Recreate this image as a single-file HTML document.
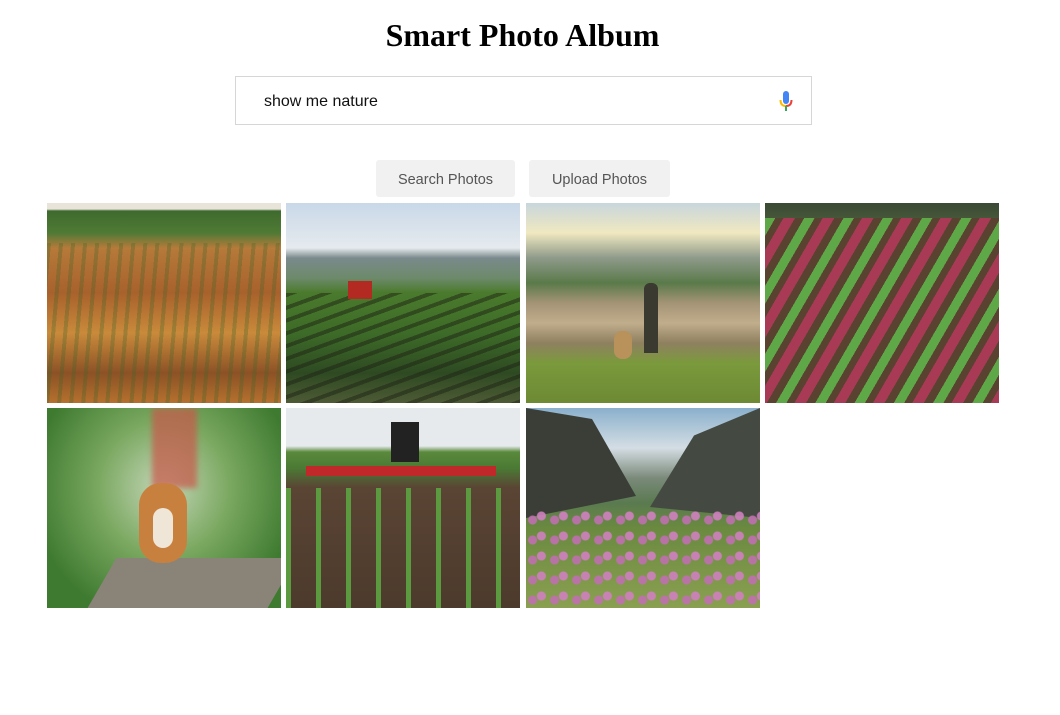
<!DOCTYPE html>
<html><head><meta charset="utf-8"><style>
html,body{margin:0;padding:0;background:#fff;width:1060px;height:715px;overflow:hidden}
h1{position:absolute;left:0;width:1045px;top:17px;margin:0;text-align:center;font-family:"Liberation Serif",serif;font-weight:bold;font-size:32px;color:#000}
.search{position:absolute;left:235px;top:76px;width:575px;height:47px;border:1px solid #d6d6d6;box-sizing:content-box}
.search span{position:absolute;left:28px;top:16px;font-family:"Liberation Sans",sans-serif;font-size:16px;color:#111}
.btn{position:absolute;top:160px;height:37px;background:#f1f1f1;border-radius:3px;font-family:"Liberation Sans",sans-serif;font-size:14.5px;color:#555;text-align:center;line-height:41px}
.img{position:absolute;width:234px;height:200px;overflow:hidden}
</style></head><body>
<h1>Smart Photo Album</h1>
<div class="search"><span>show me nature</span>
<svg style="position:absolute;left:543px;top:14px" width="14" height="21" viewBox="0 0 14 21">
<rect x="4" y="0" width="6" height="13" rx="3" fill="#4285f4"/>
<path d="M1.5 9 Q1.5 15 7 15" stroke="#fbbc05" stroke-width="2" fill="none"/>
<path d="M12.5 9 Q12.5 15 7 15" stroke="#ea4335" stroke-width="2" fill="none"/>
<rect x="6" y="15" width="2" height="5" fill="#34a853"/>
</svg></div>
<div class="btn" style="left:376px;width:139px">Search Photos</div>
<div class="btn" style="left:529px;width:141px">Upload Photos</div>

<div class="img" style="left:47px;top:203px;background:linear-gradient(#e8e4da 0,#e8e4da 6px,#3e6a2e 8px,#4f7a35 30px,#b67a3a 45px,#a8612c 90px,#c98a3b 130px,#8c5226 170px,#b5702e 200px)">
<div style="position:absolute;inset:40px 0 0 0;background:repeating-linear-gradient(95deg,rgba(60,100,40,.3) 0 4px,transparent 4px 12px)"></div></div>

<div class="img" style="left:286px;top:203px;background:linear-gradient(#c9d8e8 0,#e5eaee 45px,#7a8a8c 55px,#6d8a6a 75px,#4a7a2c 90px,#3d6b28 130px,#2e4a22 170px,#4d5a35 200px)">
<div style="position:absolute;inset:90px 0 0 0;background:repeating-linear-gradient(160deg,rgba(30,35,20,.5) 0 4px,transparent 4px 12px)"></div>
<div style="position:absolute;left:62px;top:78px;width:24px;height:18px;background:#b22a22"></div></div>

<div class="img" style="left:526px;top:203px;background:linear-gradient(#c8d6dc 0,#f0e8c0 30px,#8e9a8a 55px,#5a7a4a 80px,#a49476 100px,#c0ad8c 120px,#8f8060 140px,#7a9a3c 160px,#6d8a34 200px)">
<div style="position:absolute;left:118px;top:80px;width:14px;height:70px;background:#3a3a30;border-radius:6px 6px 0 0"></div>
<div style="position:absolute;left:88px;top:128px;width:18px;height:28px;background:#b8925a;border-radius:8px"></div></div>

<div class="img" style="left:765px;top:203px;background:linear-gradient(#3a4a34 0,#4a5a3a 20px,#5a4034 40px,#55412f 200px)">
<div style="position:absolute;inset:15px 0 0 0;background:repeating-linear-gradient(120deg,#5ea848 0 9px,#5a4231 9px 16px,#a83a55 16px 26px,#5a4231 26px 34px)"></div></div>

<div class="img" style="left:47px;top:408px;background:radial-gradient(ellipse at 50% 40%,#c4d6b8 0,#7aa860 40%,#3e7a30 80%)">
<div style="position:absolute;left:105px;top:0;width:45px;height:80px;background:#c8584a;opacity:.7;filter:blur(3px)"></div>
<div style="position:absolute;left:55px;top:150px;width:180px;height:50px;background:#8a8478;transform:skewX(-30deg)"></div>
<div style="position:absolute;left:92px;top:75px;width:48px;height:80px;background:#c8803e;border-radius:22px"></div>
<div style="position:absolute;left:106px;top:100px;width:20px;height:40px;background:#f0e6d8;border-radius:10px"></div></div>

<div class="img" style="left:286px;top:408px;background:linear-gradient(#e6eaec 0,#e6eaec 38px,#5a8a3c 44px,#4b7a34 60px,#5a4434 80px,#4c3a2c 200px)">
<div style="position:absolute;inset:80px 0 0 0;background:repeating-linear-gradient(90deg,#5c9a40 0 5px,transparent 5px 30px)"></div>
<div style="position:absolute;left:20px;top:58px;width:190px;height:10px;background:#c0282a"></div>
<div style="position:absolute;left:105px;top:14px;width:28px;height:40px;background:#222"></div></div>

<div class="img" style="left:526px;top:408px;background:linear-gradient(#8ab0cc 0,#d4dde4 40px,#7a8a7a 70px,#5a7a50 95px,#6a8a40 120px,#8aa050 200px)">
<div style="position:absolute;left:0;top:0;width:110px;height:110px;background:#3a3e36;clip-path:polygon(0 0,60% 10%,100% 80%,0 100%)"></div>
<div style="position:absolute;right:0;top:0;width:110px;height:110px;background:#444a42;clip-path:polygon(100% 0,40% 25%,0 90%,100% 100%)"></div>
<div style="position:absolute;inset:100px 0 0 0;background:radial-gradient(circle at 30% 60%,#c070b0 0 4px,transparent 5px),radial-gradient(circle at 70% 40%,#d080c0 0 4px,transparent 5px);background-size:22px 20px;opacity:.9"></div></div>
</body></html>
